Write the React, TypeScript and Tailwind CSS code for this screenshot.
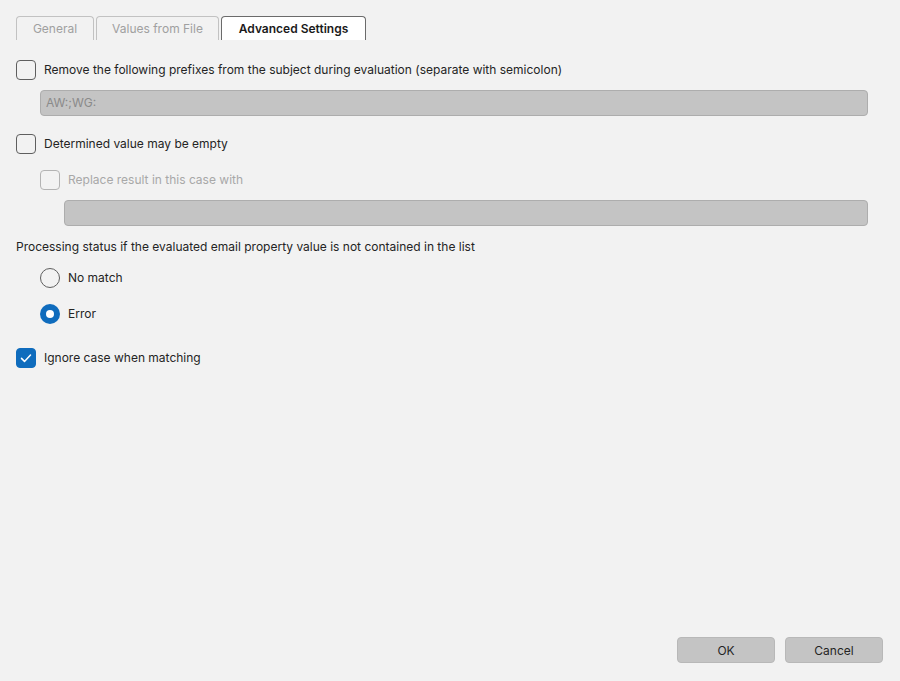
import React, { useState } from 'react';

const font = { fontFamily: 'Inter, "Noto Sans", sans-serif' };

function Checkbox({ checked, disabled, label, onChange }: { checked?: boolean; disabled?: boolean; label: string; onChange?: () => void }) {
  return (
    <label className="flex items-center gap-2 select-none">
      <span
        onClick={disabled ? undefined : onChange}
        className={`flex h-5 w-5 items-center justify-center rounded-[4px] border ${
          checked ? 'border-[#0f6cbd] bg-[#0f6cbd]' : disabled ? 'border-[#b3b3b3] bg-transparent' : 'border-[#5f5f5f] bg-transparent'
        }`}
      >
        {checked && (
          <svg width="14" height="14" viewBox="0 0 14 14" fill="none">
            <path d="M2.5 7.4l3 3L11.5 4" stroke="white" strokeWidth="1.5" strokeLinecap="round" strokeLinejoin="round" />
          </svg>
        )}
      </span>
      <span className={`text-[12px] ${disabled ? 'text-[#a8a8a8]' : 'text-[#242424]'}`}>{label}</span>
    </label>
  );
}

function Radio({ checked, label, onClick }: { checked?: boolean; label: string; onClick?: () => void }) {
  return (
    <label className="flex items-center gap-2 select-none" onClick={onClick}>
      <span
        className={`flex h-5 w-5 items-center justify-center rounded-full ${
          checked ? 'bg-[#0f6cbd]' : 'border border-[#5f5f5f]'
        }`}
      >
        {checked && <span className="h-2 w-2 rounded-full bg-white" />}
      </span>
      <span className="text-[12px] text-[#242424]">{label}</span>
    </label>
  );
}

function DisabledInput({ value }: { value?: string }) {
  return (
    <div className="flex h-[26px] items-center rounded-[4px] border border-[#adadad] bg-[#c4c4c4] px-[5px] text-[12px] text-[#8a8a8a]">
      {value}
    </div>
  );
}

export default function App() {
  const [tab] = useState('advanced');
  const [ignoreCase, setIgnoreCase] = useState(true);
  const [status, setStatus] = useState<'nomatch' | 'error'>('error');
  const [stripPrefixes, setStripPrefixes] = useState(false);
  const [mayBeEmpty, setMayBeEmpty] = useState(false);

  const tabs = [
    { id: 'general', label: 'General', w: 'w-[78px]' },
    { id: 'file', label: 'Values from File', w: 'w-[123px]' },
    { id: 'advanced', label: 'Advanced Settings', w: 'w-[145px]' },
  ];

  return (
    <div style={font} className="flex h-[681px] w-[900px] flex-col bg-[#f2f2f2]">
      <div className="flex flex-1 flex-col px-4 pt-4">
        {/* Tabs */}
        <div className="flex gap-[2px]">
          {tabs.map((t) => (
            <div
              key={t.id}
              className={`flex h-[24px] ${t.w} items-center justify-center rounded-t-[4px] border border-b-0 text-[12px] ${
                tab === t.id ? 'border-[#6b6b6b] bg-white font-semibold text-[#1a1a1a]' : 'border-[#c2c2c2] text-[#a0a0a0]'
              }`}
            >
              {t.label}
            </div>
          ))}
        </div>

        <div className="mt-5">
          <Checkbox
            checked={stripPrefixes}
            onChange={() => setStripPrefixes(!stripPrefixes)}
            label="Remove the following prefixes from the subject during evaluation (separate with semicolon)"
          />
          <div className="ml-6 mr-[16px] mt-[10px]">
            <DisabledInput value="AW:;WG:" />
          </div>
        </div>

        <div className="mt-[18px]">
          <Checkbox checked={mayBeEmpty} onChange={() => setMayBeEmpty(!mayBeEmpty)} label="Determined value may be empty" />
          <div className="ml-6 mt-4">
            <Checkbox disabled label="Replace result in this case with" />
          </div>
          <div className="ml-12 mr-[16px] mt-[10px]">
            <DisabledInput />
          </div>
        </div>

        <div className="mt-[12px] text-[12px] text-[#242424]">
          Processing status if the evaluated email property value is not contained in the list
        </div>
        <div className="ml-6 mt-[12px] flex flex-col gap-4">
          <Radio checked={status === 'nomatch'} onClick={() => setStatus('nomatch')} label="No match" />
          <Radio checked={status === 'error'} onClick={() => setStatus('error')} label="Error" />
        </div>

        <div className="mt-[24px]">
          <Checkbox checked={ignoreCase} onChange={() => setIgnoreCase(!ignoreCase)} label="Ignore case when matching" />
        </div>
      </div>

      {/* Dialog buttons */}
      <div className="flex justify-end gap-[10px] pb-[18px] pr-[17px]">
        <button className="h-[26px] w-[98px] rounded-[4px] border border-[#b8b8b8] bg-[#c4c4c4] pt-px text-[12px] text-[#242424]">OK</button>
        <button className="h-[26px] w-[98px] rounded-[4px] border border-[#b8b8b8] bg-[#c4c4c4] pt-px text-[12px] text-[#242424]">Cancel</button>
      </div>
    </div>
  );
}
